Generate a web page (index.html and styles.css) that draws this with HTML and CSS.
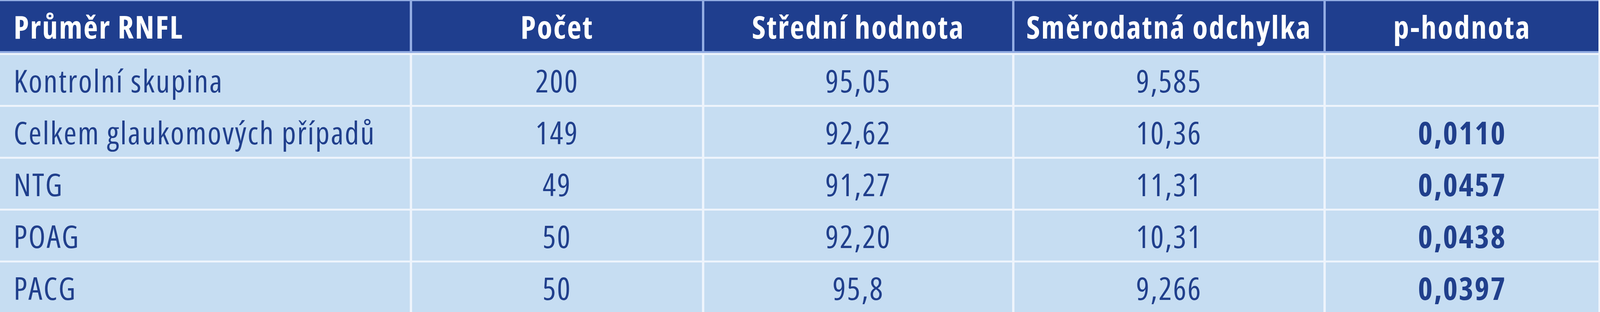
FILE: index.html
```html
<!DOCTYPE html>
<html lang="cs">
<head>
<meta charset="utf-8">
<title>Průměr RNFL</title>
<link rel="stylesheet" href="styles.css">
</head>
<body>
<div class="table">
  <div class="head">
    <div class="cell left">Průměr RNFL</div>
    <div class="cell">Počet</div>
    <div class="cell">Střední hodnota</div>
    <div class="cell">Směrodatná odchylka</div>
    <div class="cell">p-hodnota</div>
  </div>
  <div class="body">
    <div class="cell left">Kontrolní skupina</div>
    <div class="cell">200</div>
    <div class="cell">95,05</div>
    <div class="cell">9,585</div>
    <div class="cell"></div>

    <div class="cell left">Celkem glaukomových případů</div>
    <div class="cell">149</div>
    <div class="cell">92,62</div>
    <div class="cell">10,36</div>
    <div class="cell strong">0,0110</div>

    <div class="cell left">NTG</div>
    <div class="cell">49</div>
    <div class="cell">91,27</div>
    <div class="cell">11,31</div>
    <div class="cell strong">0,0457</div>

    <div class="cell left">POAG</div>
    <div class="cell">50</div>
    <div class="cell">92,20</div>
    <div class="cell">10,31</div>
    <div class="cell strong">0,0438</div>

    <div class="cell left">PACG</div>
    <div class="cell">50</div>
    <div class="cell">95,8</div>
    <div class="cell">9,266</div>
    <div class="cell strong">0,0397</div>
  </div>
</div>
</body>
</html>
```
FILE: styles.css
```css
html, body {
  margin: 0;
  padding: 0;
  background: #eef4fc;
}

.table {
  width: 100%;
  height: 800px;
  box-sizing: border-box;
  padding-right: 0.09vw;
  background: #eef4fc;
  font-family: "Open Sans", "Noto Sans", sans-serif;
  font-size: 80px;
  font-stretch: 75%;
  letter-spacing: 3px;
  color: #203f8c;
}

.head,
.body {
  display: grid;
  grid-template-columns: 1146fr 811fr 861fr 864fr 763fr;
  column-gap: 6px;
}

.head {
  background: #93ade3;
  padding-top: 3px;
  padding-bottom: 5px;
  grid-template-rows: 128px;
}

.body {
  padding-top: 5px;
  row-gap: 5px;
  grid-template-rows: repeat(5, 128px);
}

.cell {
  display: flex;
  align-items: center;
  justify-content: center;
  white-space: nowrap;
  min-width: 0;
  background: #c6ddf2;
}

.head .cell {
  background: #1f3e8e;
  color: #ffffff;
  font-weight: 700;
}

.cell.left {
  justify-content: flex-start;
  padding-left: 0.85vw;
}

.cell.strong {
  font-weight: 700;
}
```
